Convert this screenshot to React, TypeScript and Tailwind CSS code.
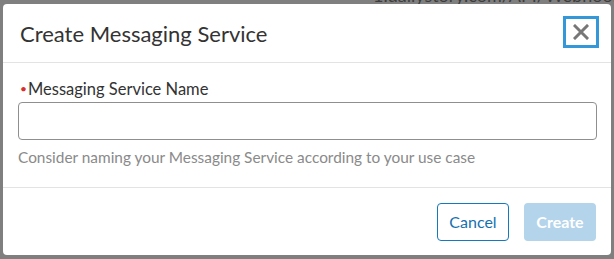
export default function App() {
  return (
    <div className="relative w-[614px] h-[259px] overflow-hidden bg-[#7f7f7f] font-['Lato',sans-serif]">
      {/* page text peeking above the modal */}
      <div className="absolute left-[373px] top-[-18px] whitespace-nowrap text-[18px] text-[#3d3d3d]">
        1.dailystory.com/API/Webhooks/Tw
      </div>

      <div className="absolute left-[3px] top-[4px] w-[608px] h-[251px] rounded-[4px] bg-white flex flex-col">
        {/* Header */}
        <div className="h-[59px] flex items-center justify-between pl-[17px] pr-[12px] border-b border-[#e3e3e3]">
          <h2 className="text-[22px] text-[#333] pt-[1px]">Create Messaging Service</h2>
          <button className="w-[36px] h-[32px] -mt-[3px] border-[3px] border-[#3498d8] flex items-center justify-center">
            <svg width="16" height="16" viewBox="0 0 16 16">
              <path d="M2 2 L14 14 M14 2 L2 14" stroke="#777" strokeWidth="3" strokeLinecap="square" />
            </svg>
          </button>
        </div>

        {/* Body */}
        <div className="h-[125px] px-[15px] pt-[16px] border-b border-[#e3e3e3]">
          <label className="flex items-center gap-[1px] text-[16.5px] leading-[20px] text-[#333] pl-[2px]">
            <span className="text-[#d9302b] text-[12px]">•</span>
            Messaging Service Name
          </label>
          <input className="mt-[3px] w-[579px] h-[38px] rounded-[4px] border border-[#8f8f8f] outline-none px-2" />
          <p className="mt-[6px] text-[15.4px] text-[#8a8a8a]">
            Consider naming your Messaging Service according to your use case
          </p>
        </div>

        {/* Footer */}
        <div className="flex-1 flex items-center justify-end gap-[15px] pr-[15px]">
          <button className="w-[72px] h-[38px] rounded-[4px] border border-[#1479bd] text-[16px] text-[#1670b0] bg-white">
            Cancel
          </button>
          <button className="w-[72px] h-[38px] rounded-[4px] bg-[#b3d4ea] text-[16px] font-bold text-white">
            Create
          </button>
        </div>
      </div>
    </div>
  );
}
